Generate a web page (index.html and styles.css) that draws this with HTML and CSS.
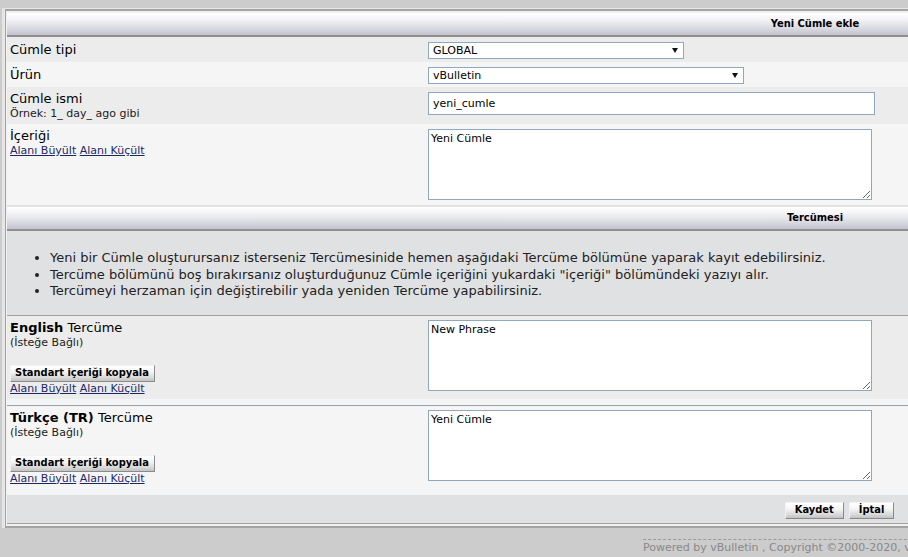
FILE: index.html
```html
<!DOCTYPE html>
<html lang="tr">
<head>
<meta charset="utf-8">
<title>Yeni Cümle ekle</title>
<link rel="stylesheet" href="styles.css">
</head>
<body>
<div class="outer">
  <div class="frame">
    <div class="thead">Yeni Cümle ekle</div>

    <div class="row alt1">
      <div class="lbl lbl-sel">Cümle tipi</div>
      <div class="ctl ctl-sel"><span class="selwrap"><select class="sel sel-type"><option>GLOBAL</option></select></span></div>
    </div>
    <div class="row alt2">
      <div class="lbl lbl-sel">Ürün</div>
      <div class="ctl ctl-sel"><span class="selwrap"><select class="sel sel-product"><option>vBulletin</option></select></span></div>
    </div>
    <div class="row alt1">
      <div class="lbl">Cümle ismi<div class="small">Örnek: 1_ day_ ago gibi</div></div>
      <div class="ctl ctl-txt"><input class="txt" type="text" value="yeni_cumle"></div>
    </div>
    <div class="row alt2">
      <div class="lbl">İçeriği<div class="small"><a href="#">Alanı Büyült</a> <a href="#">Alanı Küçült</a></div></div>
      <div class="ctl ctl-area"><textarea class="area">Yeni Cümle</textarea></div>
    </div>

    <div class="thead thead-sep">Tercümesi</div>
    <div class="info">
      <ul>
        <li>Yeni bir Cümle oluşturursanız isterseniz Tercümesinide hemen aşağıdaki Tercüme bölümüne yaparak kayıt edebilirsiniz.</li>
        <li>Tercüme bölümünü boş bırakırsanız oluşturduğunuz Cümle içeriğini yukardaki "içeriği" bölümündeki yazıyı alır.</li>
        <li>Tercümeyi herzaman için değiştirebilir yada yeniden Tercüme yapabilirsiniz.</li>
      </ul>
    </div>

    <div class="row trans alt1">
      <div class="lbl"><b>English</b> Tercüme<div class="small">(İsteğe Bağlı)</div>
        <div class="copy"><button class="btn btn-copy" type="button">Standart içeriği kopyala</button></div>
        <div class="small"><a href="#">Alanı Büyült</a> <a href="#">Alanı Küçült</a></div>
      </div>
      <div class="ctl"><textarea class="area">New Phrase</textarea></div>
    </div>
    <div class="strip"></div>

    <div class="row trans alt2">
      <div class="lbl"><b>Türkçe (TR)</b> Tercüme<div class="small">(İsteğe Bağlı)</div>
        <div class="copy"><button class="btn btn-copy" type="button">Standart içeriği kopyala</button></div>
        <div class="small"><a href="#">Alanı Büyült</a> <a href="#">Alanı Küçült</a></div>
      </div>
      <div class="ctl"><textarea class="area">Yeni Cümle</textarea></div>
    </div>
    <div class="strip"></div>

    <div class="foot">
      <button class="btn btn-wide" type="submit">Kaydet</button>
      <button class="btn btn-wide" type="reset">İptal</button>
    </div>
  </div>
</div>
<div class="copyright">Powered by vBulletin , Copyright ©2000-2020, vBulletin Solutions, Inc.</div>
</body>
</html>
```
FILE: styles.css
```css
html, body {
  margin: 0;
  padding: 0;
  overflow: hidden;
}
body {
  background: #cccccc;
  font-family: "DejaVu Sans", Verdana, sans-serif;
  font-size: 13px;
  color: #000;
}
.outer {
  margin: 8px 0 0 2px;
  width: 1624px;
  background: #e6e6e6;
  padding: 1px 0 0 3px;
}
.frame {
  border-top: 2px solid #a3a3a3;
  border-left: 1px solid #a3a3a3;
  border-bottom: 2px solid #a3a3a3;
  padding: 2px 0 2px 1px;
  background: #f0f0f0;
  width: 1616px;
}
.thead {
  height: 22px;
  line-height: 22px;
  text-align: center;
  font-family: "DejaVu Sans Condensed", "DejaVu Sans", sans-serif;
  font-stretch: condensed;
  font-weight: bold;
  font-size: 11px;
  background: linear-gradient(to bottom, #ffffff 0%, #f3f3f6 30%, #dcdce3 65%, #c3c4cf 100%);
  border-bottom: 2px solid #8f8f8f;
}
.thead-sep {
  border-top: 2px solid #e2e2e2;
}
.row {
  display: grid;
  grid-template-columns: 417px 1fr;
}
.alt1 { background: #ececec; }
.alt2 { background: #f5f5f5; }
.lbl {
  padding: 4px 4px 4px 3px;
  line-height: 16px;
}
.lbl-sel {
  padding-top: 5px;
  padding-bottom: 3px;
}
.small {
  font-size: 11px;
  line-height: 13px;
  color: #222;
}
.small a {
  color: #1b2868;
  text-decoration: underline;
}
.ctl {
  padding: 4px;
}
.ctl-sel {
  padding: 5px 4px 3px 4px;
}
.ctl-txt {
  padding-top: 5px;
}
.ctl-area {
  padding-top: 5px;
  padding-bottom: 5px;
}
.selwrap {
  position: relative;
  display: inline-block;
  vertical-align: top;
}
.selwrap::after {
  content: "";
  position: absolute;
  right: 6px;
  top: 6px;
  border-left: 3px solid transparent;
  border-right: 3px solid transparent;
  border-top: 5px solid #111;
  pointer-events: none;
}
.sel {
  appearance: none;
  -webkit-appearance: none;
  display: block;
  box-sizing: border-box;
  height: 17px;
  margin: 0;
  padding: 0 4px;
  border: 1px solid #8ea8bf;
  border-radius: 0;
  background: #fff;
  font-family: "DejaVu Sans", Verdana, sans-serif;
  font-size: 11px;
  line-height: 15px;
  color: #000;
}
.sel-type { width: 256px; }
.sel-product { width: 316px; }
.txt {
  display: block;
  box-sizing: border-box;
  width: 447px;
  height: 23px;
  margin: 0;
  padding: 0 4px;
  border: 1px solid #8ea8bf;
  background: #fff;
  font-family: "DejaVu Sans", Verdana, sans-serif;
  font-size: 11px;
  color: #000;
  outline: none;
}
.area {
  display: block;
  box-sizing: border-box;
  width: 444px;
  height: 71px;
  margin: 0;
  padding: 2px 2px;
  border: 1px solid #8ea8bf;
  background: #fff;
  font-family: "DejaVu Sans", Verdana, sans-serif;
  font-size: 11px;
  line-height: 13px;
  color: #000;
  outline: none;
}
.info {
  background: #e0e1e3;
  padding: 6px 0 6px 3px;
  font-size: 13px;
  line-height: 16.5px;
  color: #222;
}
.info ul {
  margin: 13px 0 9px;
  padding-left: 40px;
}
.trans {
  border-top: 1px solid #a0a0a0;
}
.copy {
  margin-top: 16px;
  line-height: 0;
}
.btn {
  box-sizing: border-box;
  height: 17px;
  margin: 0;
  padding: 0 6px;
  white-space: nowrap;
  font-family: "DejaVu Sans Condensed", "DejaVu Sans", sans-serif;
  font-stretch: condensed;
  font-weight: bold;
  font-size: 11px;
  line-height: 14px;
  color: #000;
  background: linear-gradient(to bottom, #ffffff 0%, #f4f4f4 40%, #d6d6d6 80%, #c2c2c2 100%);
  border: 1px solid;
  border-color: #f2f2f2 #8a8a8a #8a8a8a #f2f2f2;
  border-radius: 0;
}
.btn-copy { padding: 0 5px 0 4px; }
.btn-wide { padding: 0 9px; }
.strip {
  height: 6px;
  background: #f3f4f5;
}
.foot {
  display: flex;
  justify-content: center;
  gap: 5px;
  padding: 7px 0 4px 49px;
  background: #e0e1e3;
  border-bottom: 1px solid #a0a0a0;
}
.copyright {
  margin: 11px 0 0 643px;
  width: 600px;
  white-space: nowrap;
  border-top: 1px dashed #9a9a9a;
  padding-top: 1px;
  font-size: 11px;
  line-height: 14px;
  color: #888;
}
```
